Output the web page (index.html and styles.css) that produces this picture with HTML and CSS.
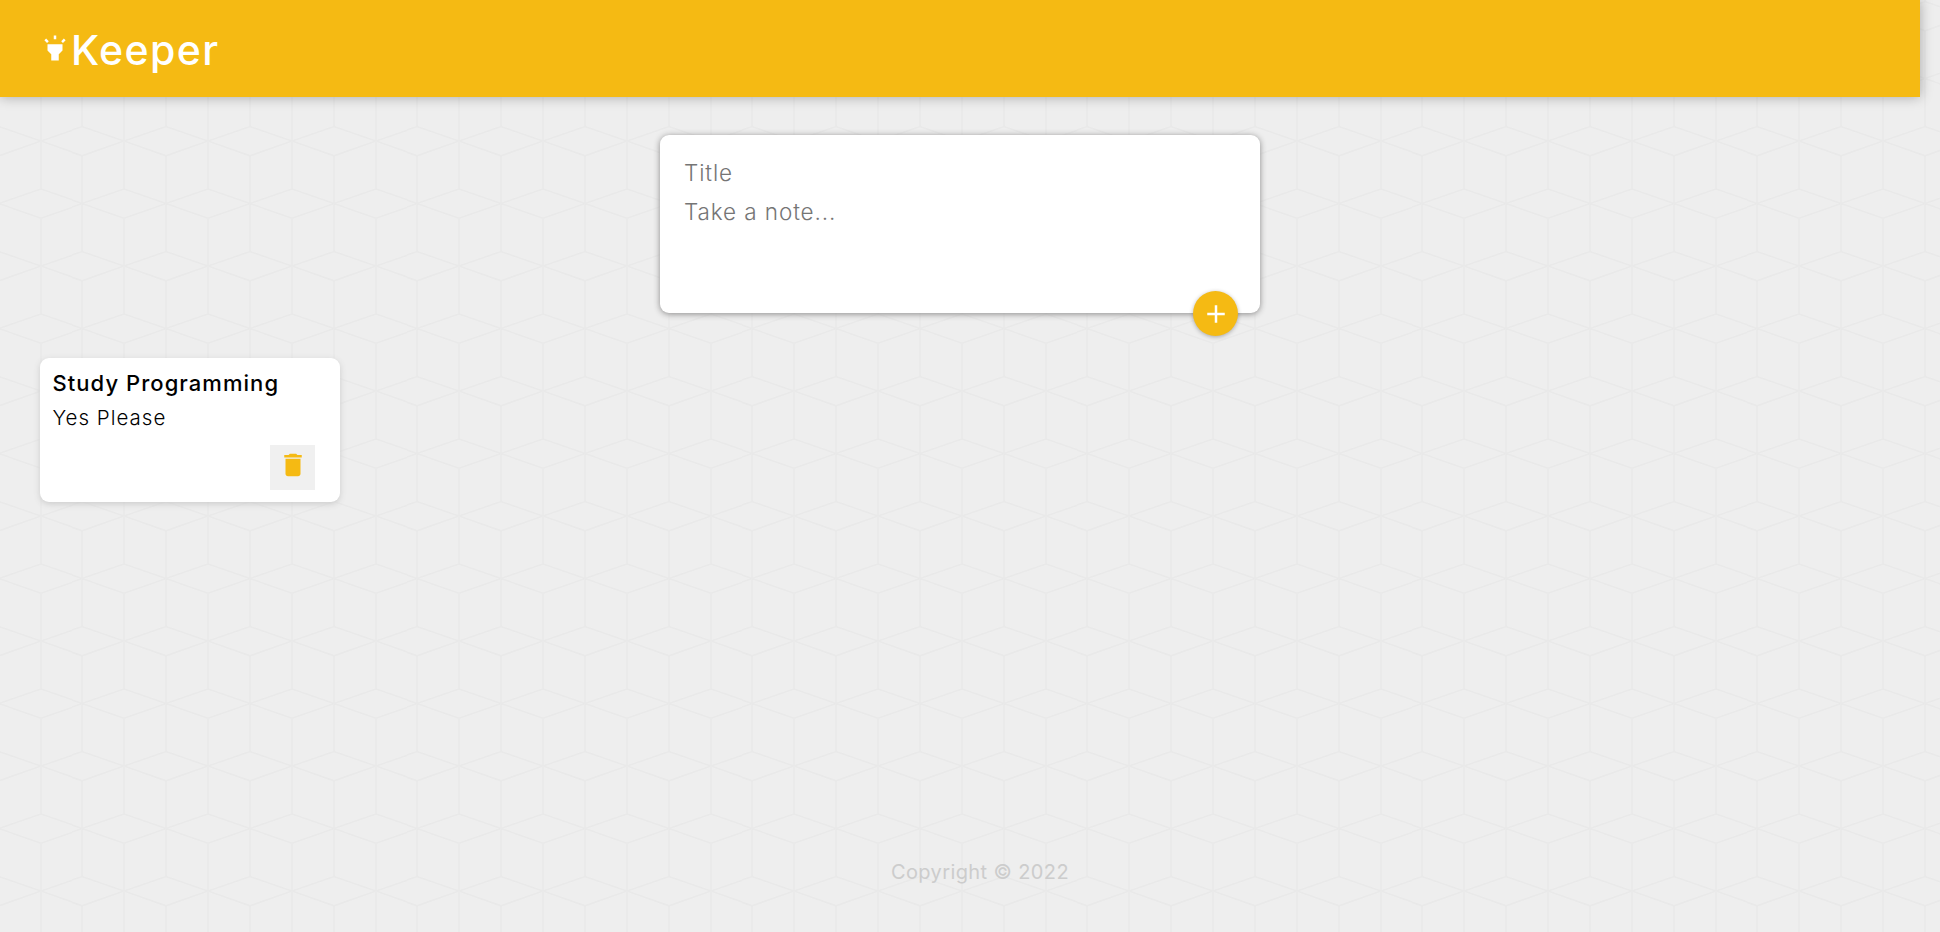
FILE: index.html
```html
<!DOCTYPE html>
<html>
<head>
  <title>Keeper</title>
  <link rel="stylesheet" href="styles.css">
</head>
<body>
  <div class="app">
    <!-- Header -->
    <header class="header">
      <h1 class="logo">
        <svg class="logo-icon" viewBox="0 0 24 24"><path d="M6 14l3 3v5h6v-5l3-3V9H6zm5-12h2v3h-2zM3.5 5.875L4.914 4.46l2.12 2.122L5.62 7.997zm13.46.71l2.123-2.12 1.414 1.414L18.375 8z"/></svg>
        <span class="logo-text">Keeper</span>
      </h1>
    </header>

    <!-- New note form -->
    <form class="create-note">
      <input class="note-input title-input" type="text" placeholder="Title">
      <textarea class="note-input body-input" rows="3" placeholder="Take a note..."></textarea>
      <button class="add-btn" type="button">
        <svg viewBox="0 0 24 24"><path d="M19 13h-6v6h-2v-6H5v-2h6V5h2v6h6v2z"/></svg>
      </button>
    </form>

    <!-- Notes -->
    <main class="notes">
      <div class="note">
        <h2 class="note-title">Study Programming</h2>
        <p class="note-text">Yes Please</p>
        <button class="delete-btn" type="button">
          <svg viewBox="0 0 24 24"><path d="M6 19c0 1.1.9 2 2 2h8c1.1 0 2-.9 2-2V7H6v12zM19 4h-3.5l-1-1h-5l-1 1H5v2h14V4z"/></svg>
        </button>
      </div>
    </main>

    <footer class="footer">
      <p>Copyright &copy; 2022</p>
    </footer>
  </div>
</body>
</html>
```

FILE: styles.css
```css
* {
  box-sizing: border-box;
}
html, body {
  margin: 0;
  padding: 0;
  height: 100%;
  overflow: hidden;
}
body {
  font-family: "Inter", "Liberation Sans", sans-serif;
  background-color: #eee;
  background-image: url("data:image/svg+xml,%3Csvg xmlns='http://www.w3.org/2000/svg' width='83.75' height='125' viewBox='0 0 83.75 125'%3E%3Cg fill='none' stroke='%23e9e9e9' stroke-width='1.6'%3E%3Cpath d='M0 0V48M0 77.3V125M83.75 0V48M83.75 77.3V125M41.87 14.8V110.5'/%3E%3Cpath d='M0 0L41.87 14.8L83.75 0M0 48L41.87 62.5L83.75 48M0 77.3L41.87 62.5L83.75 77.3M0 125L41.87 110.5L83.75 125'/%3E%3C/g%3E%3C/svg%3E");
  background-size: 83.75px 125px;
  background-position: 40.6px 16px;
}
.app {
  width: 1920px;
  height: 100%;
  display: flex;
  flex-direction: column;
}

/* Header */
.header {
  height: 97px;
  padding: 0 40px;
  display: flex;
  align-items: center;
  background-color: #f5ba13;
  box-shadow: 0 0 12px rgba(0, 0, 0, 0.3);
}
.logo {
  margin: 0;
  display: flex;
  align-items: center;
  color: #fff;
  font-size: 41px;
  font-weight: 500;
  letter-spacing: 1.4px;
}
.logo-icon {
  width: 30px;
  height: 30px;
  margin-top: -2px;
  margin-right: 1px;
  fill: #fff;
}
.logo-text {
  padding-top: 3px;
}

/* Create note */
.create-note {
  position: relative;
  width: 600px;
  height: 178px;
  margin: 38px auto 45px;
  padding: 18px 19px;
  background: #fff;
  border-radius: 9px;
  box-shadow: 0 1px 6px #8a8989;
}
.note-input {
  display: block;
  width: 100%;
  padding: 5px;
  border: none;
  outline: none;
  resize: none;
  font-family: inherit;
  font-size: 22.5px;
  font-weight: 350;
  letter-spacing: 0.9px;
  line-height: 29px;
  color: #333;
}
.note-input::placeholder {
  color: #757575;
}
.add-btn {
  position: absolute;
  right: 22px;
  bottom: -23px;
  width: 45px;
  height: 45px;
  padding: 0;
  border: none;
  border-radius: 50%;
  display: flex;
  align-items: center;
  justify-content: center;
  background: #f5ba13;
  box-shadow: 0 1px 4px rgba(0, 0, 0, 0.3);
}
.add-btn svg {
  width: 30px;
  height: 30px;
  fill: #fff;
}

/* Notes */
.notes {
  flex: 1;
  padding: 0 40px;
}
.note {
  position: relative;
  width: 300px;
  height: 144px;
  padding: 12px 12.5px;
  background: #fff;
  border-radius: 9px;
  box-shadow: 0 2px 6px #ccc;
}
.note-title {
  margin: 0 0 8px;
  font-size: 22px;
  line-height: 27px;
  font-weight: 500;
  letter-spacing: 1.05px;
  color: #000;
}
.note-text {
  margin: 0;
  font-size: 20.5px;
  font-weight: 300;
  line-height: 26px;
  letter-spacing: 1px;
  color: #000;
}
.delete-btn {
  position: absolute;
  right: 25px;
  bottom: 12px;
  width: 45px;
  height: 45px;
  padding: 0 0 5px;
  border: none;
  display: flex;
  align-items: center;
  justify-content: center;
  background: #f0f0f0;
}
.delete-btn svg {
  width: 30px;
  height: 30px;
  fill: #f5ba13;
}

/* Footer */
.footer {
  padding: 0 0 48px 40px;
  text-align: center;
  color: #ccc;
  font-size: 20px;
  letter-spacing: 0.4px;
}
.footer p {
  margin: 0;
}
```
